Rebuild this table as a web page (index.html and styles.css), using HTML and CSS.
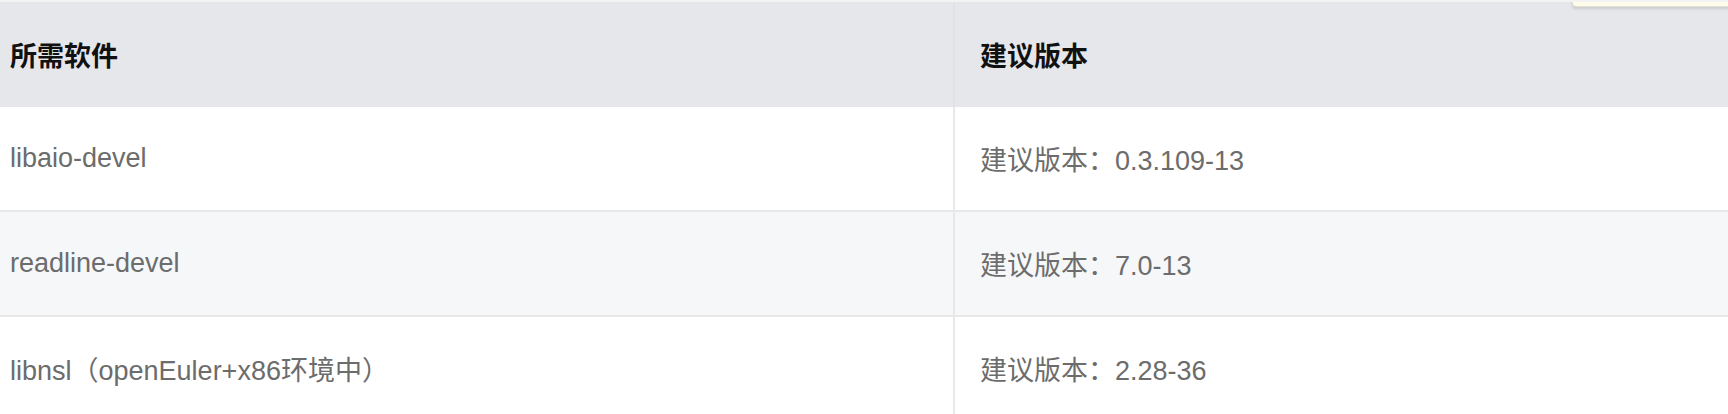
FILE: index.html
```html
<!DOCTYPE html>
<html lang="zh-CN">
<head>
<meta charset="utf-8">
<title>所需软件</title>
<link rel="stylesheet" href="styles.css">
</head>
<body>
<div class="page">
  <table class="sw-table">
    <thead>
      <tr>
        <th class="c1">所需软件</th>
        <th class="c2">建议版本</th>
      </tr>
    </thead>
    <tbody>
      <tr>
        <td class="c1">libaio-devel</td>
        <td class="c2">建议版本：0.3.109-13</td>
      </tr>
      <tr class="alt">
        <td class="c1">readline-devel</td>
        <td class="c2">建议版本：7.0-13</td>
      </tr>
      <tr>
        <td class="c1">libnsl（openEuler+x86环境中）</td>
        <td class="c2">建议版本：2.28-36</td>
      </tr>
    </tbody>
  </table>
  <div class="tip"></div>
</div>
</body>
</html>
```

FILE: styles.css
```css
html, body {
  margin: 0;
  padding: 0;
  background: #ffffff;
}
body {
  font-family: "Liberation Sans", "Noto Sans CJK SC", sans-serif;
  overflow: hidden;
}
.page {
  position: relative;
  width: 1728px;
  height: 414px;
  overflow: hidden;
  border-top: 2px solid #f3f3f4;
  box-sizing: border-box;
}
.sw-table {
  width: 1728px;
  border-collapse: collapse;
  table-layout: fixed;
}
.sw-table th,
.sw-table td {
  text-align: left;
  vertical-align: middle;
  font-size: 27px;
  padding: 0;
  white-space: nowrap;
}
.sw-table th {
  background: #e6e7eb;
  color: #111111;
  font-weight: bold;
  height: 105px;
}
.sw-table td {
  height: 103px;
  color: #6c6c6c;
  border-bottom: 2px solid #e8e8e9;
}
.sw-table .c1 {
  width: 943px;
  padding-left: 10px;
  border-right: 2px solid #e8e8e9;
}
.sw-table th.c1 {
  border-right: 2px solid #e1e2e6;
}
.sw-table .c2 {
  padding-left: 25px;
}
.sw-table tr.alt td {
  background: #f6f7f9;
}
.tip {
  position: absolute;
  top: -12px;
  right: -4px;
  width: 158px;
  height: 15px;
  background: #fdfbea;
  border: 1px solid #e4e1cc;
  border-radius: 4px;
  box-shadow: 0 2px 3px rgba(0, 0, 0, 0.12);
}
```
